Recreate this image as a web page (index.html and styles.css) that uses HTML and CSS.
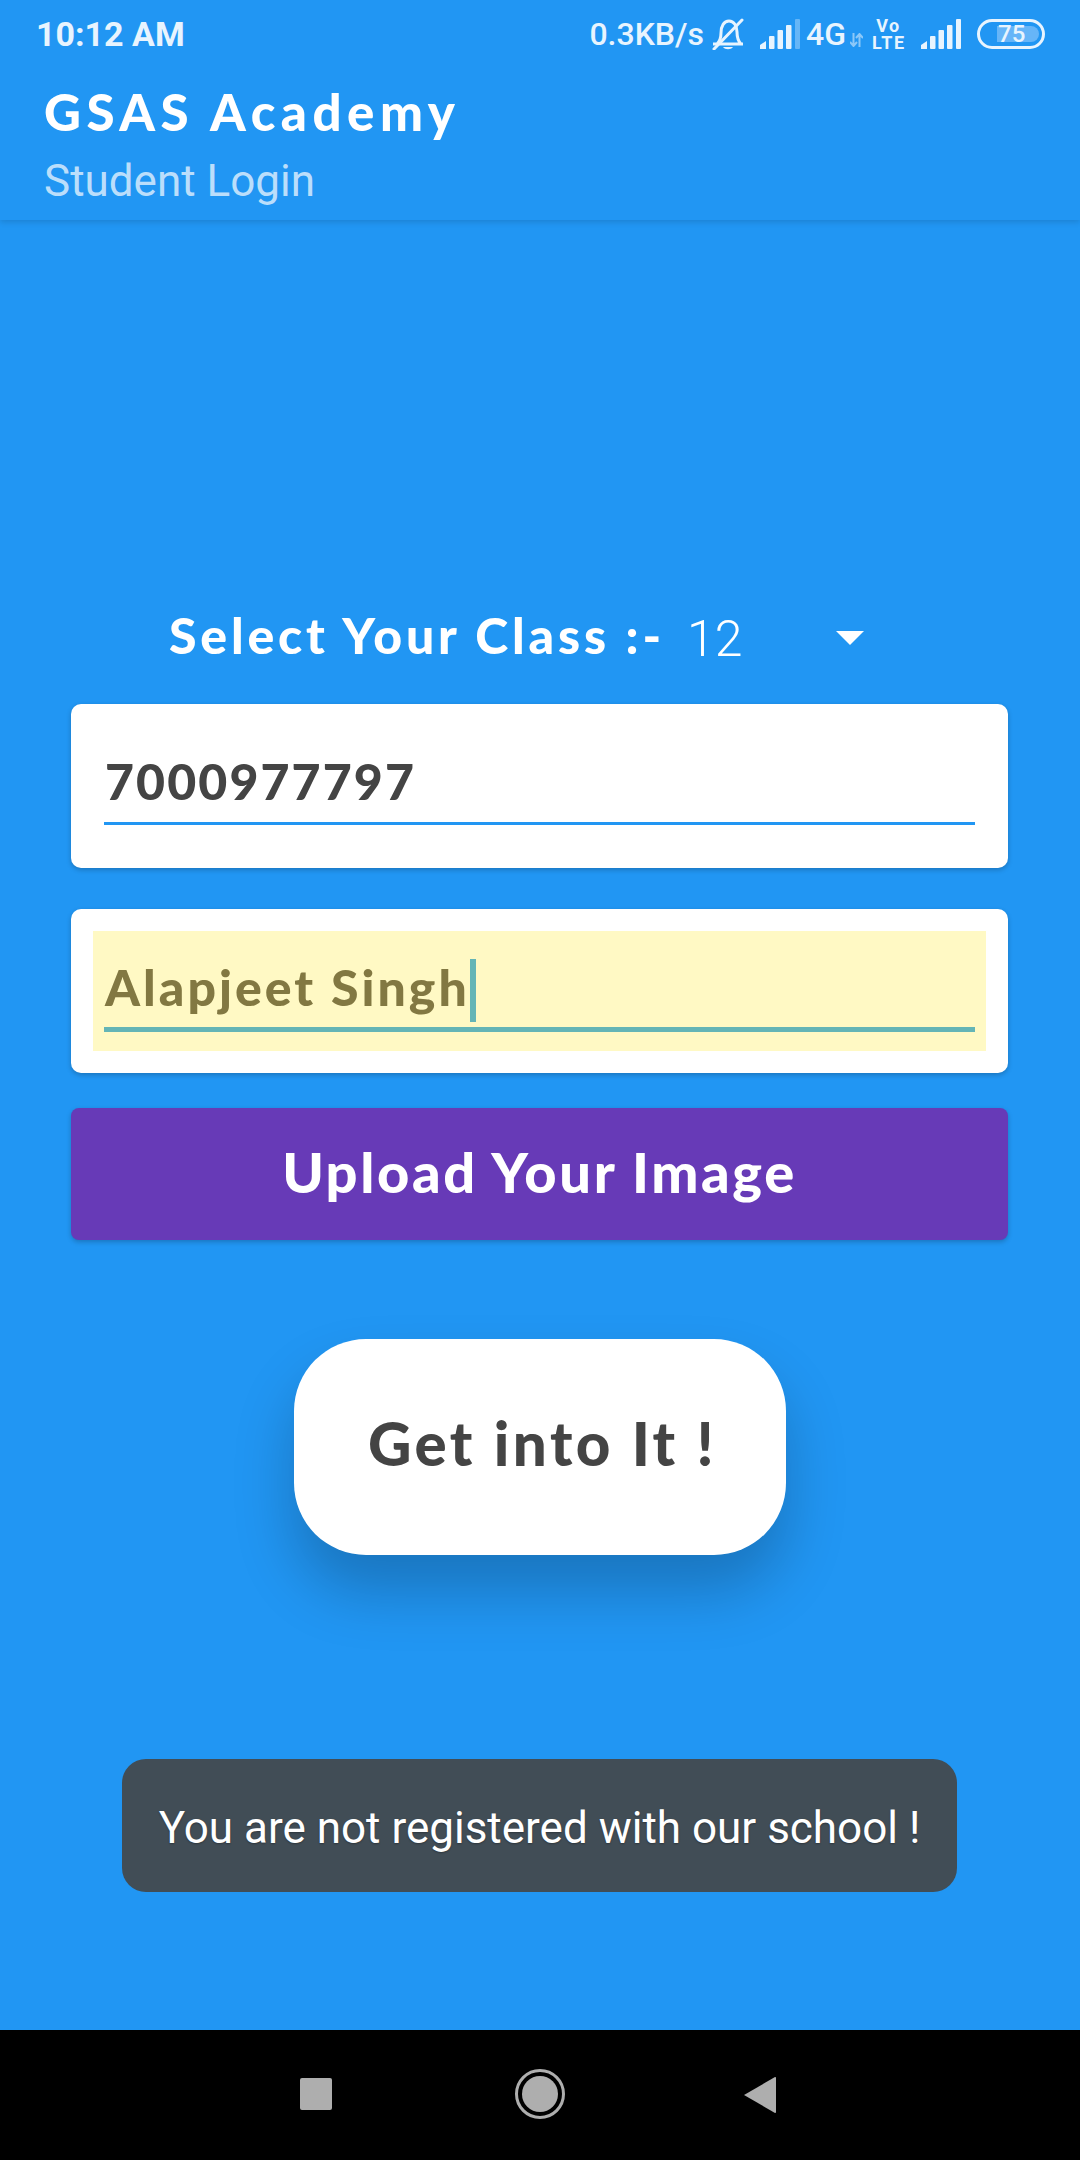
FILE: index.html
```html
<!DOCTYPE html>
<html lang="en">
<head>
    <meta charset="UTF-8">
    <meta name="viewport" content="width=device-width, initial-scale=1.0">
    <title>GSAS Academy</title>
    <link rel="stylesheet" href="styles.css">
</head>
<body>
    <div class="screen">
        <header class="app-header">
            <div class="status-bar">
                <span class="clock">10:12 AM</span>
                <div class="status-icons">
                    <span class="net-speed">0.3KB/s</span>
                    <svg class="bell" width="32" height="32" viewBox="0 0 32 32" fill="none" stroke="#e8f4fe" stroke-width="3">
                        <path d="M1 26h30M5 26c3-3 4-6 4-11 0-7 3-12 8-12s8 5 8 11c0 6 1 9 4 12"/>
                        <path d="M11 29h10c-2 3-8 3-10 0z" fill="#e8f4fe" stroke="none"/>
                        <path d="M2 31 30 2" stroke-linecap="round"/>
                    </svg>
                    <svg class="signal" width="40" height="30" viewBox="0 0 40 30" fill="#e8f4fe">
                        <path d="M0 30v-4l6-4v8z"/>
                        <rect x="9" y="17" width="5.500" height="13" rx="1"/>
                        <rect x="17.500" y="11" width="5.500" height="19" rx="1"/>
                        <rect x="26" y="6" width="5.500" height="24" rx="1"/>
                        <rect x="35" y="0" width="5" height="30" rx="1" opacity=".35"/>
                    </svg>
                    <span class="net-type">4G</span>
                    <svg class="arrows" width="13" height="14" viewBox="0 0 13 14" fill="none" stroke="#8cc8f8" stroke-width="2">
                        <path d="M3.500 0v12M0 9l3.500 4L7 9M9.500 14V2M6 5l3.500-4L13 5"/>
                    </svg>
                    <span class="volte">Vo<br>LTE</span>
                    <svg class="signal" width="40" height="30" viewBox="0 0 40 30" fill="#e8f4fe">
                        <path d="M0 30v-4l6-4v8z"/>
                        <rect x="9" y="17" width="5.500" height="13" rx="1"/>
                        <rect x="17.500" y="11" width="5.500" height="19" rx="1"/>
                        <rect x="26" y="6" width="5.500" height="24" rx="1"/>
                        <rect x="35" y="0" width="5" height="30" rx="1"/>
                    </svg>
                    <div class="battery">
                        <div class="battery-level"></div>
                        <span class="battery-text">75</span>
                    </div>
                </div>
            </div>
            <div class="toolbar">
                <h1 class="app-title">GSAS Academy</h1>
                <p class="app-subtitle">Student Login</p>
            </div>
        </header>

        <main class="content">
            <div class="class-row">
                <span class="class-label">Select Your Class :-</span>
                <span class="class-value">12</span>
                <span class="class-arrow"></span>
            </div>

            <div class="card">
                <div class="field">7000977797</div>
            </div>

            <div class="card card-filled">
                <div class="autofill">
                    <div class="field field-active">Alapjeet Singh<span class="caret"></span></div>
                </div>
            </div>

            <button class="upload-btn" type="button">Upload Your Image</button>

            <button class="login-btn" type="button">Get into It !</button>

            <div class="toast">You are not registered with our school !</div>
        </main>

        <nav class="nav-bar">
            <span class="nav-square"></span>
            <span class="nav-home"><span class="nav-home-dot"></span></span>
            <svg width="32" height="36" viewBox="0 0 32 36" fill="#aeaeae">
                <path d="M31 0c.6 0 1 .5 1 1v34c0 .5-.4 1-1 1L0 18z"/>
            </svg>
        </nav>
    </div>
</body>
</html>
```

FILE: styles.css
```css
* {
    box-sizing: border-box;
}
body {
    margin: 0;
    font-family: Roboto, sans-serif;
    background-color: #000;
}
.screen {
    width: 1080px;
    height: 2160px;
    display: flex;
    flex-direction: column;
    background-color: #2196f3;
}

/* Header */
.app-header {
    height: 220px;
    flex: none;
    box-shadow: 0 2px 6px rgba(0, 0, 0, 0.14);
}
.status-bar {
    height: 68px;
    padding: 0 35px 0 36px;
    display: flex;
    align-items: center;
    justify-content: space-between;
    color: #e8f4fe;
}
.clock {
    font-size: 34px;
    font-weight: 700;
}
.status-icons {
    display: flex;
    align-items: center;
}
.net-speed {
    font-size: 32px;
    font-weight: 500;
    margin-right: 8px;
}
.bell {
    margin-right: 16px;
}
.net-type {
    font-size: 32px;
    font-weight: 500;
    margin-left: 6px;
}
.arrows {
    margin: 12px 0 0 4px;
}
.volte {
    width: 33px;
    margin: 0 16px 0 9px;
    font-size: 18px;
    font-weight: 700;
    line-height: 17px;
    text-align: center;
    letter-spacing: 1.5px;
    white-space: nowrap;
}
.battery {
    position: relative;
    width: 68px;
    height: 30px;
    margin-left: 16px;
    padding: 4px;
    border: 3px solid #e8f4fe;
    border-radius: 15px;
}
.battery-level {
    width: 42px;
    height: 16px;
    margin-left: 13px;
    border-radius: 0 8px 8px 0;
    background-color: #66b5f8;
}
.battery-text {
    position: absolute;
    top: -1px;
    left: 18px;
    font-size: 24px;
    line-height: 26px;
    font-weight: 500;
}
.toolbar {
    padding: 16px 0 0 44px;
}
.app-title {
    margin: 0;
    font-family: Lato, sans-serif;
    font-size: 51px;
    line-height: 56px;
    font-weight: 900;
    letter-spacing: 5.5px;
    color: #fff;
}
.app-subtitle {
    margin: 16px 0 0;
    font-size: 44px;
    line-height: 50px;
    font-weight: 400;
    color: #bbdefb;
}

/* Form */
.content {
    flex: 1;
    position: relative;
    padding: 388px 72px 0 71px;
    display: flex;
    flex-direction: column;
}
.class-row {
    height: 60px;
    padding-left: 98px;
    display: flex;
    align-items: center;
    color: #fff;
}
.class-label {
    width: 518px;
    margin-top: -7px;
    font-family: Lato, sans-serif;
    font-size: 50px;
    font-weight: 900;
    letter-spacing: 3.8px;
    white-space: nowrap;
}
.class-value {
    width: 149px;
    margin-top: 2px;
    font-size: 50px;
    font-weight: 300;
}
.class-arrow {
    border-left: 14px solid transparent;
    border-right: 14px solid transparent;
    border-top: 14px solid #fff;
}
.card {
    height: 164px;
    margin-top: 36px;
    padding: 0 33px;
    background-color: #fff;
    border-radius: 10px;
    box-shadow: 0 2px 5px rgba(0, 0, 0, 0.22);
}
.card-filled {
    margin-top: 41px;
    padding: 22px;
}
.autofill {
    height: 120px;
    padding: 0 11px;
    background-color: #fff9c4;
}
.field {
    height: 121px;
    padding: 47px 0 0 1px;
    border-bottom: 3px solid #2196f3;
    font-family: Lato, sans-serif;
    font-size: 50px;
    line-height: 60px;
    font-weight: 900;
    letter-spacing: 2.1px;
    color: #444;
}
.field-active {
    height: 101px;
    padding-top: 26px;
    border-bottom: 5px solid #64b5b6;
    letter-spacing: 3px;
    color: #827842;
    white-space: nowrap;
}
.caret {
    display: inline-block;
    width: 6px;
    height: 63px;
    vertical-align: -16px;
    background-color: #64b5b6;
}
.upload-btn {
    height: 132px;
    margin-top: 35px;
    padding: 0 0 5px;
    border: none;
    border-radius: 8px;
    background-color: #673ab7;
    box-shadow: 0 2px 5px rgba(0, 0, 0, 0.22);
    color: #fff;
    font-family: Lato, sans-serif;
    font-size: 56px;
    font-weight: 900;
    letter-spacing: 2.6px;
}
.login-btn {
    align-self: center;
    width: 492px;
    height: 216px;
    margin-top: 99px;
    padding: 0 0 8px 6px;
    border: none;
    border-radius: 72px;
    background-color: #fff;
    box-shadow: 0 36px 60px rgba(0, 0, 0, 0.22);
    color: #444;
    font-family: Lato, sans-serif;
    font-size: 60px;
    font-weight: 900;
    letter-spacing: 3.5px;
}
.toast {
    position: absolute;
    left: 122px;
    top: 1539px;
    width: 835px;
    height: 133px;
    padding-top: 3px;
    border-radius: 24px;
    background-color: #414d56;
    color: #fff;
    font-size: 44px;
    line-height: 133px;
    text-align: center;
    text-shadow: 0 1px 2px rgba(0, 0, 0, 0.3);
    white-space: nowrap;
}

/* Bottom navigation */
.nav-bar {
    height: 130px;
    flex: none;
    padding-left: 300px;
    display: flex;
    align-items: center;
    background-color: #000;
}
.nav-square {
    width: 32px;
    height: 32px;
    margin-top: -2px;
    border-radius: 2px;
    background-color: #aeaeae;
}
.nav-home {
    width: 50px;
    height: 50px;
    margin: -2px 179px 0 183px;
    display: flex;
    align-items: center;
    justify-content: center;
    border: 3px solid #aeaeae;
    border-radius: 50%;
}
.nav-home-dot {
    width: 36px;
    height: 36px;
    border-radius: 50%;
    background-color: #aeaeae;
}
```
